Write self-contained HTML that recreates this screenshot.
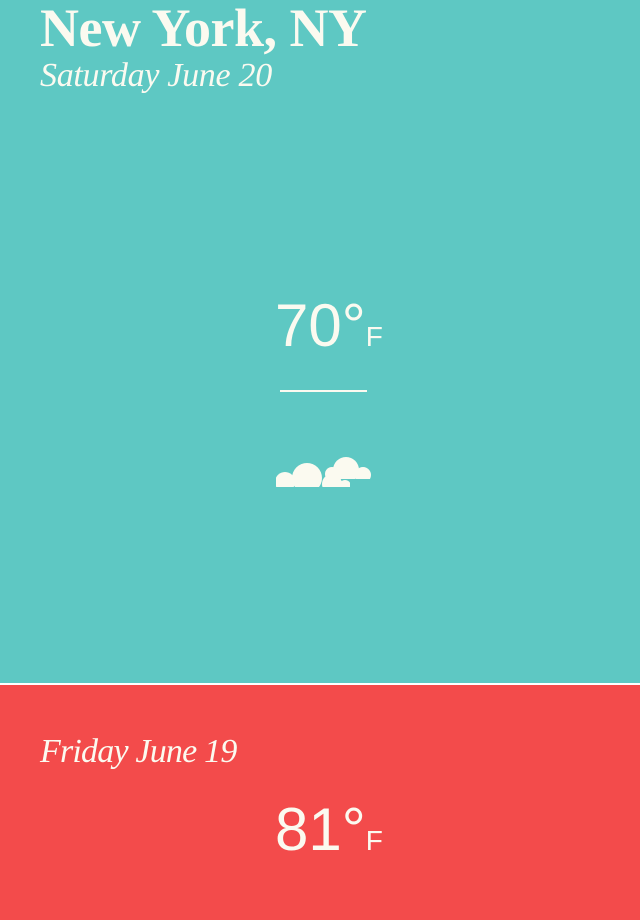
<!DOCTYPE html>
<html><head><meta charset="utf-8"><style>
html,body{margin:0;padding:0;width:640px;height:920px;overflow:hidden;background:#5ec8c3;}
.t{position:absolute;color:#fbfaf0;white-space:nowrap;}
.title{left:40px;top:-2px;font:bold 54px/60px "Liberation Serif",serif;letter-spacing:-0.5px;}
.sub{left:40px;top:56px;font:italic 34px/40px "Liberation Serif",serif;letter-spacing:-0.3px;}
.temp{font:60px/60px "Liberation Sans",sans-serif;}
.temp span{font-size:28px;}
#red{position:absolute;left:0;top:685px;width:640px;height:235px;background:#f34b4b;}
#line{position:absolute;left:0;top:683px;width:640px;height:2px;background:#fff;}
</style></head><body>
<div class="t title">New York, NY</div>
<div class="t sub">Saturday June 20</div>
<div class="t temp" style="left:275px;top:296px">70°<span>F</span></div>
<div style="position:absolute;left:280px;top:390px;width:87px;height:2px;background:#fbfaf0"></div>
<svg style="position:absolute;left:0;top:0" width="640" height="500">
<defs>
<clipPath id="c1"><rect x="276" y="440" width="74" height="47"/></clipPath>
<clipPath id="c2"><rect x="320" y="440" width="51" height="39"/></clipPath>
</defs>
<g fill="#fbfaf0">
<g clip-path="url(#c2)"><circle cx="346" cy="470" r="13"/><circle cx="332" cy="474" r="7"/><circle cx="363" cy="475" r="8"/></g>
<g clip-path="url(#c1)"><circle cx="307" cy="478" r="15"/><circle cx="285" cy="482" r="10"/><circle cx="332" cy="484" r="10"/><circle cx="345" cy="486" r="6"/></g>
</g></svg>
<div id="line"></div>
<div id="red"></div>
<div class="t sub" style="top:732px;left:40px;letter-spacing:-0.8px">Friday June 19</div>
<div class="t temp" style="left:275px;top:800px">81°<span>F</span></div>
</body></html>
